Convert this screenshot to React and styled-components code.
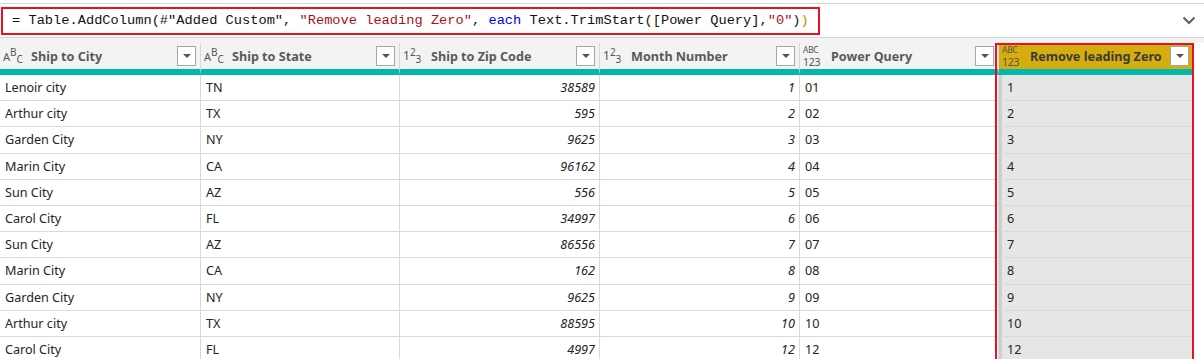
import React from "react";
import styled, { createGlobalStyle } from "styled-components";

const rows = [
  ["Lenoir city", "TN", "38589", "1", "01", "1"],
  ["Arthur city", "TX", "595", "2", "02", "2"],
  ["Garden City", "NY", "9625", "3", "03", "3"],
  ["Marin City", "CA", "96162", "4", "04", "4"],
  ["Sun City", "AZ", "556", "5", "05", "5"],
  ["Carol City", "FL", "34997", "6", "06", "6"],
  ["Sun City", "AZ", "86556", "7", "07", "7"],
  ["Marin City", "CA", "162", "8", "08", "8"],
  ["Garden City", "NY", "9625", "9", "09", "9"],
  ["Arthur city", "TX", "88595", "10", "10", "10"],
  ["Carol City", "FL", "4997", "12", "12", "12"],
];

const columns = [
  { name: "Ship to City", type: "abc" },
  { name: "Ship to State", type: "abc" },
  { name: "Ship to Zip Code", type: "num", numeric: true },
  { name: "Month Number", type: "num", numeric: true },
  { name: "Power Query", type: "any" },
  { name: "Remove leading Zero", type: "any", active: true },
];

const Global = createGlobalStyle`
  body {
    margin: 0;
    background: #fff;
    font-family: "Noto Sans", "Open Sans", sans-serif;
    overflow: hidden;
  }
`;

const Page = styled.div`
  width: 1204px;
  height: 359px;
  overflow: hidden;
  background: #fff;
`;

const FormulaBar = styled.div`
  margin-top: 3px;
  height: 33px;
  border-top: 1px solid #d4d4d4;
  border-bottom: 1px solid #d4d4d4;
  background: #fff;
  display: flex;
  align-items: center;
  justify-content: space-between;
  padding: 0 8px 0 1px;
`;

const FormulaBox = styled.div`
  width: 806px;
  height: 24px;
  border: 2px solid #e81123;
  display: flex;
  align-items: center;
  padding-left: 9px;
  font-family: "Liberation Mono", "DejaVu Sans Mono", monospace;
  font-size: 13.7px;
  color: #111;
  white-space: pre;
`;

const Tok = styled.span`
  color: ${(p) => p.$c || "#111"};
`;

const Gap = styled.div`
  height: 5px;
  background: #f3f3f3;
`;

const Grid = styled.div`
  position: relative;
  display: grid;
  grid-template-columns: 201px 199px 200px 200px 199px 195px 10px;
`;

const HeadCell = styled.div`
  height: 26px;
  display: flex;
  align-items: center;
  gap: 4px;
  padding: 0 4px 0 3px;
  background: ${(p) => (p.$active ? "#d5ad0f" : "#f3f3f3")};
  border-right: 1px solid #d9d9d9;
  border-bottom: 6px solid #01b8aa;
  font-weight: 700;
  font-size: 12.6px;
  color: ${(p) => (p.$active ? "#3a3a3a" : "#5a5a5a")};
`;

const Label = styled.span`
  flex: 1;
  white-space: nowrap;
  overflow: hidden;
`;

const TypeIcon = styled.span`
  width: 24px;
  flex: none;
  display: inline-flex;
  align-items: center;
  color: #555;
  font-weight: 400;
  font-size: ${(p) => (p.$num ? "12px" : "11px")};
  line-height: 1;
`;

const Sup = styled.span`
  font-size: 10px;
  position: relative;
  top: -4px;
`;

const Sub = styled.span`
  font-size: 10px;
  position: relative;
  top: 3px;
`;

const Stack = styled.span`
  display: flex;
  flex-direction: column;
  font-size: 8.5px;
  line-height: 12px;
  letter-spacing: -0.3px;
  span:last-child {
    font-size: 10.5px;
    line-height: 12px;
  }
`;

const DropBtn = styled.span`
  width: 17px;
  height: 18px;
  flex: none;
  border: 1px solid #a6a6a6;
  background: #fff;
  display: flex;
  align-items: center;
  justify-content: center;
  &::after {
    content: "";
    border-left: 4px solid transparent;
    border-right: 4px solid transparent;
    border-top: 4px solid #555;
  }
`;

const Cell = styled.div`
  height: 25.2px;
  display: flex;
  align-items: center;
  justify-content: ${(p) => (p.$numeric ? "flex-end" : "flex-start")};
  padding: ${(p) => (p.$numeric ? "0 4px 0 0" : "0 0 0 5px")};
  font-size: 12.6px;
  font-style: ${(p) => (p.$numeric ? "italic" : "normal")};
  color: #252423;
  background: ${(p) => (p.$active ? "#e6e6e6" : "#fff")};
  border-right: 1px solid #d9d9d9;
  border-bottom: 1px solid #d9d9d9;
  border-left: ${(p) => (p.$active ? "3px solid #cfcfcf" : "none")};
`;

const Filler = styled.div`
  background: #fff;
`;

const Highlight = styled.div`
  position: absolute;
  left: 995px;
  top: 0;
  width: 195px;
  height: 330px;
  border: 2px solid #e81123;
  pointer-events: none;
`;

function Icon({ type }) {
  if (type === "abc")
    return (
      <TypeIcon>
        A<Sup>B</Sup>
        <Sub>C</Sub>
      </TypeIcon>
    );
  if (type === "num")
    return (
      <TypeIcon $num>
        1<Sup>2</Sup>
        <Sub>3</Sub>
      </TypeIcon>
    );
  return (
    <TypeIcon>
      <Stack>
        <span>ABC</span>
        <span>123</span>
      </Stack>
    </TypeIcon>
  );
}

function Chevron() {
  return (
    <svg width="14" height="9" viewBox="0 0 14 9">
      <path d="M1.5 1.5 L7 7 L12.5 1.5" fill="none" stroke="#5f5f5f" strokeWidth="2" />
    </svg>
  );
}

export default function App() {
  return (
    <Page>
      <Global />
      <FormulaBar>
        <FormulaBox>
          <Tok>= Table.AddColumn(#"Added Custom", </Tok>
          <Tok $c="#a31515">"Remove leading Zero"</Tok>
          <Tok>, </Tok>
          <Tok $c="#0000ff">each</Tok>
          <Tok> Text.TrimStart([Power Query],</Tok>
          <Tok $c="#a31515">"0"</Tok>
          <Tok>)</Tok>
          <Tok $c="#c08a00">)</Tok>
        </FormulaBox>
        <Chevron />
      </FormulaBar>
      <Gap />
      <Grid>
        {columns.map((c) => (
          <HeadCell key={c.name} $active={c.active}>
            <Icon type={c.type} />
            <Label>{c.name}</Label>
            <DropBtn />
          </HeadCell>
        ))}
        <Filler />
        {rows.map((r, i) => (
          <React.Fragment key={i}>
            {r.map((v, j) => (
              <Cell key={j} $numeric={columns[j].numeric} $active={columns[j].active}>
                {v}
              </Cell>
            ))}
            <Filler />
          </React.Fragment>
        ))}
        <Highlight />
      </Grid>
    </Page>
  );
}
